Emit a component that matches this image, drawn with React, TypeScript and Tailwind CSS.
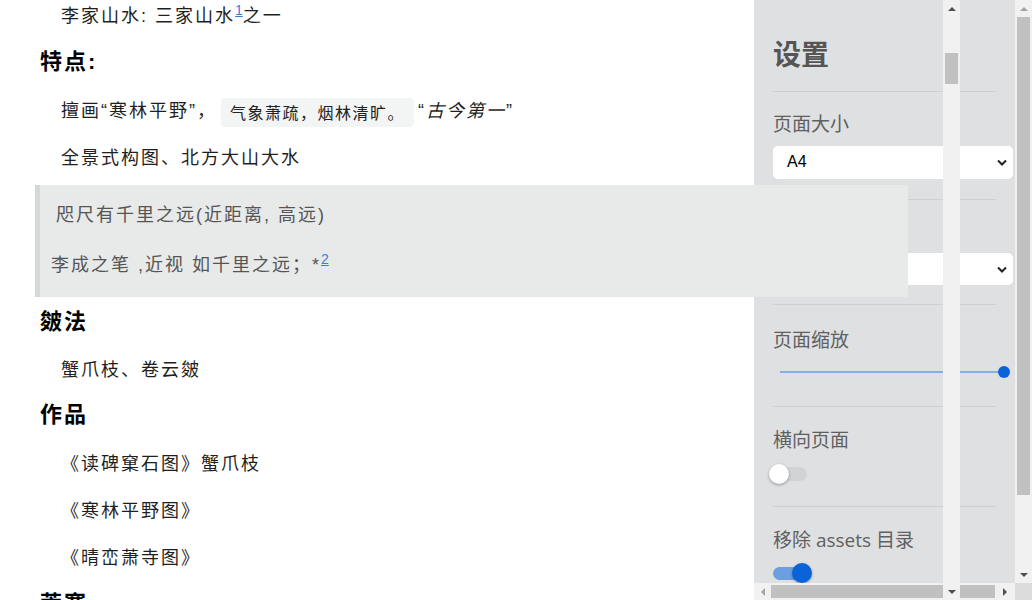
import React from 'react'

const mainFont = "font-['Liberation_Sans','Noto_Sans_CJK_SC',sans-serif]"

const Arrow = ({ dir, color }: { dir: 'up' | 'down' | 'left' | 'right'; color: string }) => {
  const pts = {
    up: '0,4 8,4 4,0',
    down: '0,0 8,0 4,4',
    left: '4,0 4,8 0,4',
    right: '0,0 0,8 4,4',
  }[dir]
  const vertical = dir === 'up' || dir === 'down'
  return (
    <svg width={vertical ? 8 : 4} height={vertical ? 4 : 8} viewBox={vertical ? '0 0 8 4' : '0 0 4 8'}>
      <polygon points={pts} fill={color} />
    </svg>
  )
}

// footnote marker, kept out of the line box so it doesn't push the line down
const Sup = ({ n }: { n: string }) => (
  <span className="relative -top-[7px] text-[14px] leading-none text-[#3b7ddd] underline tracking-normal">{n}</span>
)

const Para = ({ className = '', children }: { className?: string; children: React.ReactNode }) => (
  <p className={`pl-[21px] text-[18px] leading-[32px] tracking-[2px] text-[#1f1f1f] ${className}`}>{children}</p>
)

const Heading = ({ className = '', children }: { className?: string; children: React.ReactNode }) => (
  <h2 className={`text-[22px] leading-[36px] tracking-[2px] font-bold text-black ${className}`}>{children}</h2>
)

const Divider = ({ className = '' }: { className?: string }) => (
  <div className={`h-px w-[223px] bg-[#cdcfd1] ${className}`} />
)

const Label = ({ className = '', children }: { className?: string; children: React.ReactNode }) => (
  <div className={`text-[19px] leading-[28px] text-[#606060] ${className}`}>{children}</div>
)

const Select = ({ value, className = '' }: { value: string; className?: string }) => (
  <div className={`flex items-center justify-between w-[240px] h-[33px] bg-white rounded-[5px] pl-[14px] pr-[6px] ${className}`}>
    <span className="text-[16px] text-black font-['Liberation_Sans',sans-serif]">{value}</span>
    <svg width="10" height="7" viewBox="0 0 10 7">
      <polyline points="1,1.5 5,5.5 9,1.5" fill="none" stroke="#222" strokeWidth="2" />
    </svg>
  </div>
)

export default function App() {
  return (
    <div className={`flex w-[1032px] h-[600px] overflow-hidden bg-white ${mainFont}`}>
      {/* Document */}
      <div className="w-[754px] shrink-0 pl-[40px] flex flex-col">
        <Para className="tracking-[2.3px]">
          李家山水: 三家山水<Sup n="1" />之一
        </Para>
        <Heading className="mt-[12px]">特点:</Heading>
        <Para className="mt-[15px]">
          擅画“寒林平野”，
          <code className="inline-block ml-[4px] px-[9px] h-[29px] leading-[29px] align-middle rounded-[4px] bg-[#f3f4f4] text-[16px] tracking-[1.5px] text-[#222] font-['Noto_Sans_CJK_SC',monospace]">
            气象萧疏，烟林清旷。
          </code>
          <span className="ml-[4px]">“<em className="italic">古今第一</em>”</span>
        </Para>
        <Para className="mt-[15px]">全景式构图、北方大山大水</Para>

        <blockquote className="relative z-10 -ml-[5px] mt-[11px] w-[873px] h-[112px] shrink-0 border-l-[5px] border-[#d6d8d8] bg-[#e8e9e9] pt-[14px] text-[18px] tracking-[2px] text-[#555]">
          <p className="pl-[16px] leading-[32px]">咫尺有千里之远(近距离, 高远)</p>
          <p className="pl-[11px] mt-[18px] leading-[32px]">
            李成之笔 ,近视 如千里之远；*<Sup n="2" />
          </p>
        </blockquote>

        <Heading className="mt-[7px]">皴法</Heading>
        <Para className="mt-[14px]">蟹爪枝、卷云皴</Para>
        <Heading className="mt-[11px]">作品</Heading>
        <Para className="mt-[15px]">《读碑窠石图》蟹爪枝</Para>
        <Para className="mt-[15px]">《寒林平野图》</Para>
        <Para className="mt-[15px]">《晴峦萧寺图》</Para>
        <Heading className="mt-[12px]">荒寒</Heading>
      </div>

      {/* Settings panel */}
      <div className="relative w-[261px] shrink-0 h-[600px] flex flex-col">
        <div className="h-[583px] bg-[#dfe0e2] pl-[19px] flex flex-col font-['Open_Sans','Noto_Sans_CJK_SC',sans-serif] overflow-hidden">
          <div className="pt-[33px] text-[28px] leading-[40px] font-bold text-[#555] font-['Noto_Sans_CJK_SC',sans-serif]">设置</div>
          <Divider className="mt-[18px]" />
          <Label className="mt-[18px]">页面大小</Label>
          <Select value="A4" className="mt-[8px]" />
          <Divider className="mt-[20px]" />
          <Label className="mt-[17px]">页面方向</Label>
          <Select value="纵向" className="mt-[8px]" />
          <Divider className="mt-[19px]" />
          <Label className="mt-[21px]">页面缩放</Label>
          <div className="relative mt-[12px] h-[12px] w-[237px] flex items-center">
            <div className="ml-[7px] h-[2px] flex-1 bg-[#86aee6]" />
            <div className="w-[12px] h-[12px] rounded-full bg-[#0a63d8] -ml-[6px]" />
          </div>
          <Divider className="mt-[28px]" />
          <Label className="mt-[19px]">横向页面</Label>
          <div className="mt-[10px] h-[20px] w-[34px] flex items-center relative">
            <div className="ml-[2px] h-[14px] w-[32px] rounded-full bg-[#d2d3d5]" />
            <div className="absolute -left-[4px] top-0 w-[20px] h-[20px] rounded-full bg-white shadow-[0_1px_3px_rgba(0,0,0,0.35)]" />
          </div>
          <Divider className="mt-[22px]" />
          <Label className="mt-[19px]">移除 assets 目录</Label>
          <div className="mt-[9px] h-[20px] w-[38px] flex items-center relative">
            <div className="h-[13px] w-[34px] rounded-full bg-[#6b9fe0]" />
            <div className="absolute left-[19px] top-0 w-[20px] h-[20px] rounded-full bg-[#0a64d8] shadow-[0_1px_3px_rgba(0,0,0,0.3)]" />
          </div>
        </div>

        {/* horizontal scrollbar */}
        <div className="h-[17px] bg-[#f1f1f1] flex items-center">
          <div className="w-[17px] flex justify-center"><Arrow dir="left" color="#a3a3a3" /></div>
          <div className="h-[13px] w-[172px] bg-[#c1c1c1]" />
          <div className="w-[17px]" />
          <div className="h-[13px] w-[35px] bg-[#c1c1c1]" />
          <div className="flex-1 flex justify-center"><Arrow dir="right" color="#505050" /></div>
        </div>

        {/* inner vertical scrollbar, overlays the panel */}
        <div className="absolute left-[189px] top-0 w-[17px] h-[600px] bg-[#f1f1f1] flex flex-col items-center">
          <div className="h-[17px] flex items-center"><Arrow dir="up" color="#505050" /></div>
          <div className="mt-[36px] w-[13px] h-[31px] bg-[#c1c1c1]" />
          <div className="mt-auto h-[17px] flex items-center"><Arrow dir="down" color="#505050" /></div>
        </div>
      </div>

      {/* Page scrollbar */}
      <div className="w-[17px] shrink-0 flex flex-col">
        <div className="h-[583px] bg-[#f1f1f1] flex flex-col items-center">
          <div className="h-[17px] flex items-center"><Arrow dir="up" color="#a3a3a3" /></div>
          <div className="w-[13px] h-[478px] bg-[#c1c1c1]" />
          <div className="mt-auto h-[17px] flex items-center"><Arrow dir="down" color="#505050" /></div>
        </div>
        <div className="h-[17px] bg-[#dcdcdc]" />
      </div>
    </div>
  )
}
